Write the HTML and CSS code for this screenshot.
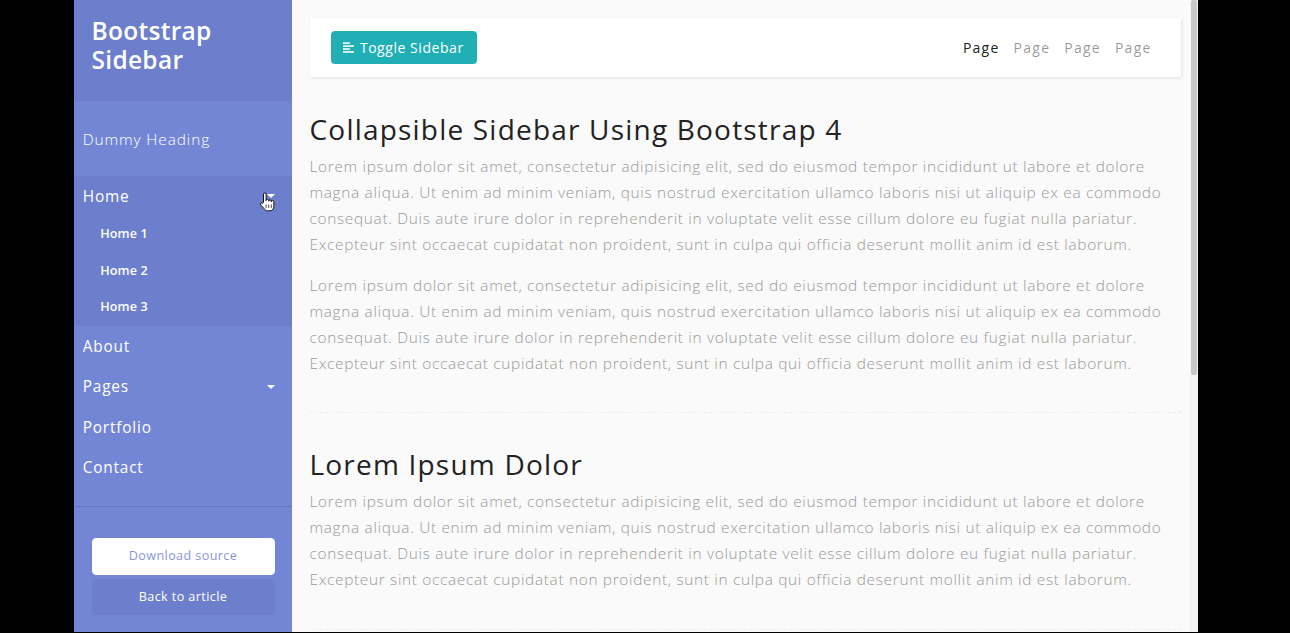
FILE: index.html
```html
<!DOCTYPE html>
<html lang="en">
<head>
<meta charset="utf-8">
<title>Collapsible Sidebar Using Bootstrap 4</title>
<link rel="stylesheet" href="styles.css">
</head>
<body>
<div class="screen">
  <nav class="sidebar">
    <div class="sidebar-header">
      <h3>Bootstrap Sidebar</h3>
    </div>
    <ul class="components">
      <li class="menu-heading">Dummy Heading</li>
      <li class="expanded">
        <a href="#" class="link toggle">Home</a>
        <ul class="submenu">
          <li><a href="#" class="link">Home 1</a></li>
          <li><a href="#" class="link">Home 2</a></li>
          <li><a href="#" class="link">Home 3</a></li>
        </ul>
      </li>
      <li><a href="#" class="link">About</a></li>
      <li><a href="#" class="link toggle">Pages</a></li>
      <li><a href="#" class="link">Portfolio</a></li>
      <li><a href="#" class="link">Contact</a></li>
    </ul>
    <ul class="ctas">
      <li><a href="#" class="cta download">Download source</a></li>
      <li><a href="#" class="cta article">Back to article</a></li>
    </ul>
    <svg class="cursor" width="17" height="21" viewBox="0 0 17 21" aria-hidden="true">
      <path d="M5.5 10.5V2.2a1.3 1.3 0 0 1 2.6 0V8.6a1.3 1.3 0 0 1 2.6 0v0.6a1.3 1.3 0 0 1 2.6 0v0.6a1.3 1.3 0 0 1 2.6 0v4.4c0 2.6-1.6 4.6-4.2 4.6H9.6c-1.6 0-2.6-0.8-3.4-2.1L2.6 12.9a1.3 1.3 0 0 1 2-1.6z" fill="#fff" stroke="#111" stroke-width="1" stroke-linejoin="round"/>
      <path d="M8.1 12.5v3.4M10.7 12.5v3.4M13.3 12.5v3.4" stroke="#111" stroke-width="0.8"/>
    </svg>
  </nav>

  <main class="content">
    <div class="topbar">
      <button class="toggle-btn" type="button">
        <svg class="align-icon" width="11" height="11" viewBox="0 0 12 12" aria-hidden="true">
          <rect x="0" y="0.4" width="7.5" height="1.7" fill="#fff"/>
          <rect x="0" y="3.6" width="12" height="1.7" fill="#fff"/>
          <rect x="0" y="6.8" width="7.5" height="1.7" fill="#fff"/>
          <rect x="0" y="10" width="12" height="1.7" fill="#fff"/>
        </svg>
        <span>Toggle Sidebar</span>
      </button>
      <ul class="nav-links">
        <li class="active">Page</li>
        <li>Page</li>
        <li>Page</li>
        <li>Page</li>
      </ul>
    </div>

    <h2>Collapsible Sidebar Using Bootstrap 4</h2>
    <p>Lorem ipsum dolor sit amet, consectetur adipisicing elit, sed do eiusmod tempor incididunt ut labore et dolore magna aliqua. Ut enim ad minim veniam, quis nostrud exercitation ullamco laboris nisi ut aliquip ex ea commodo consequat. Duis aute irure dolor in reprehenderit in voluptate velit esse cillum dolore eu fugiat nulla pariatur. Excepteur sint occaecat cupidatat non proident, sunt in culpa qui officia deserunt mollit anim id est laborum.</p>
    <p>Lorem ipsum dolor sit amet, consectetur adipisicing elit, sed do eiusmod tempor incididunt ut labore et dolore magna aliqua. Ut enim ad minim veniam, quis nostrud exercitation ullamco laboris nisi ut aliquip ex ea commodo consequat. Duis aute irure dolor in reprehenderit in voluptate velit esse cillum dolore eu fugiat nulla pariatur. Excepteur sint occaecat cupidatat non proident, sunt in culpa qui officia deserunt mollit anim id est laborum.</p>

    <div class="line"></div>

    <h2>Lorem Ipsum Dolor</h2>
    <p>Lorem ipsum dolor sit amet, consectetur adipisicing elit, sed do eiusmod tempor incididunt ut labore et dolore magna aliqua. Ut enim ad minim veniam, quis nostrud exercitation ullamco laboris nisi ut aliquip ex ea commodo consequat. Duis aute irure dolor in reprehenderit in voluptate velit esse cillum dolore eu fugiat nulla pariatur. Excepteur sint occaecat cupidatat non proident, sunt in culpa qui officia deserunt mollit anim id est laborum.</p>

    <div class="line"></div>

    <div class="scrollbar"><div class="thumb"></div></div>
  </main>
</div>
</body>
</html>
```

FILE: styles.css
```css
* {
  box-sizing: border-box;
}

html,
body {
  margin: 0;
  padding: 0;
}

body {
  background: #000;
  font-family: "Open Sans", "Liberation Sans", sans-serif;
  width: 1290px;
  height: 633px;
  overflow: hidden;
}

.screen {
  display: flex;
  margin-left: 74px;
  width: 1124px;
  height: 632px;
  background: #fafafa;
  overflow: hidden;
}

/* ---------- sidebar ---------- */
.sidebar {
  position: relative;
  flex: none;
  width: 218px;
  background: #7386d5;
  color: #fff;
}

.sidebar-header {
  background: #6d7fcc;
  padding: 16px 17.5px 26px;
}

.sidebar-header h3 {
  margin: 0;
  font-size: 24.5px;
  font-weight: 600;
  line-height: 29.4px;
  letter-spacing: 0.3px;
}

.sidebar ul {
  list-style: none;
  margin: 0;
  padding: 0;
}

.sidebar .components {
  padding: 17.5px 0;
  margin-bottom: 14px;
  border-bottom: 1px solid #6676c2;
}

.menu-heading {
  padding: 8.75px;
  margin-bottom: 14px;
  font-size: 15.4px;
  font-weight: 300;
  line-height: 26.2px;
  letter-spacing: 0.9px;
  color: #fff;
}

.link {
  display: flex;
  justify-content: space-between;
  align-items: center;
  padding: 8.75px;
  font-size: 15.4px;
  line-height: 23.1px;
  letter-spacing: 0.8px;
  color: #fff;
  text-decoration: none;
}

.expanded > .link {
  background: #6d7fcc;
}

.toggle::after {
  content: "";
  margin-right: 8.75px;
  border-top: 4.6px solid #fff;
  border-left: 4.6px solid transparent;
  border-right: 4.6px solid transparent;
}

.sidebar .submenu {
  background: #6d7fcc;
}

.submenu .link {
  padding-left: 26.25px;
  font-size: 12.6px;
  font-weight: 600;
  line-height: 18.9px;
  letter-spacing: 0.1px;
}

.sidebar .ctas {
  padding: 17.5px;
}

.cta {
  display: block;
  margin-bottom: 4.4px;
  padding: 8.75px;
  border-radius: 4.4px;
  text-align: center;
  font-size: 12.6px;
  line-height: 18.9px;
  letter-spacing: 0.4px;
  text-decoration: none;
}

.download {
  background: #fff;
  color: #8a95d6;
}

.article {
  background: #6d7fcc;
  color: #fff;
}

.cursor {
  position: absolute;
  left: 184px;
  top: 192px;
}

/* ---------- content ---------- */
.content {
  position: relative;
  flex: 1;
  padding: 17.5px;
  overflow: hidden;
}

.topbar {
  display: flex;
  justify-content: space-between;
  align-items: center;
  padding: 13.1px 21.9px;
  margin-bottom: 36px;
  background: #fff;
  box-shadow: 1px 1px 3px rgba(0, 0, 0, 0.1);
}

.toggle-btn {
  display: inline-flex;
  align-items: center;
  gap: 6px;
  padding: 5.25px 12px 5.25px 10.5px;
  border: 1px solid #1fafb5;
  border-radius: 3.5px;
  background: #1fafb5;
  color: #fff;
  font-family: inherit;
  font-size: 14px;
  line-height: 21px;
  letter-spacing: 0.55px;
}

.nav-links {
  display: flex;
  list-style: none;
  margin: 0;
  padding: 0;
}

.nav-links li {
  padding: 0 7px;
  font-size: 14px;
  line-height: 21px;
  letter-spacing: 1.25px;
  color: rgba(0, 0, 0, 0.42);
}

.nav-links li.active {
  color: #222;
}

h2 {
  margin: 0 0 7px;
  font-size: 28px;
  font-weight: 500;
  line-height: 33.6px;
  letter-spacing: 1.2px;
  color: #222;
}

.content p {
  margin: 0 -8px 14px 0;
  font-size: 15.4px;
  font-weight: 300;
  line-height: 26.18px;
  letter-spacing: 0.68px;
  color: #999;
}

.line {
  height: 1px;
  margin: 35px 0;
  border-bottom: 1px dashed #eeeeee;
}

.scrollbar {
  position: absolute;
  top: 0;
  right: 0;
  width: 8px;
  height: 100%;
  padding: 0 1px;
  background: #f4f4f4;
}

.thumb {
  height: 375px;
  border-radius: 2px;
  background: #c8c8c8;
}
```
